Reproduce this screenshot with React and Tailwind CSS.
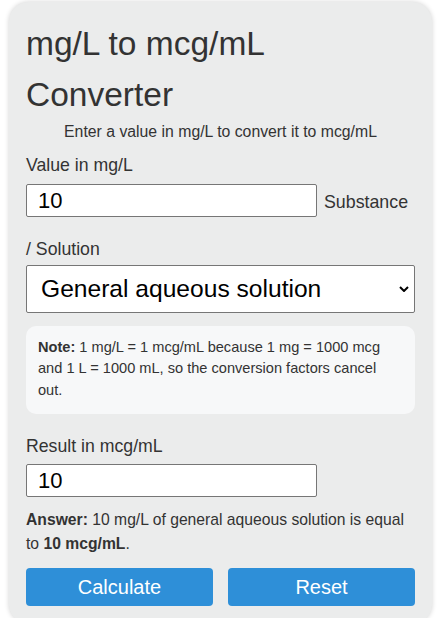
import React, { useState } from 'react'

const App = () => {
  const [value, setValue] = useState('10')
  const [result, setResult] = useState('10')

  const handleCalculate = () => setResult(value)
  const handleReset = () => {
    setValue('')
    setResult('')
  }

  return (
    <div className="min-h-[618px] bg-white pt-[2px] pl-[9px] pr-[5px] font-['Liberation_Sans',Arial,sans-serif] text-[#333]">
      <div className="rounded-[20px] bg-[#ebecec] px-[17px] pt-[16px] pb-[18px] shadow-[0_0_5px_rgba(0,0,0,0.18)]">
        {/* Header */}
        <h1 className="text-[33.5px] leading-[51px] font-normal">mg/L to mcg/mL Converter</h1>
        <p className="text-center text-[15.8px] leading-[24px]">
          Enter a value in mg/L to convert it to mcg/mL
        </p>

        {/* Value input */}
        <label className="mt-[11px] block text-[17.7px] leading-[20px]">Value in mg/L</label>
        <div className="mt-[8.7px] flex items-baseline">
          <input
            type="text"
            value={value}
            onChange={(e) => setValue(e.target.value)}
            className="h-[33px] w-[291px] rounded-[2px] border border-[#767676] bg-white px-[11px] text-[22px] text-black outline-none"
          />
          <span className="ml-[7px] text-[17.8px]">Substance</span>
        </div>
        <label className="mt-[22.6px] block text-[17.7px] leading-[20px]">/ Solution</label>
        <div className="relative mt-[6px]">
          <select className="h-[48px] w-full appearance-none rounded-[2px] border border-[#767676] bg-white pl-[14px] text-[24.6px] text-black outline-none">
            <option>General aqueous solution</option>
          </select>
          <svg
            className="pointer-events-none absolute right-[6px] top-[21px]"
            width="10"
            height="6"
            viewBox="0 0 10 6"
            fill="none"
          >
            <path d="M1 1L5 5L9 1" stroke="#000" strokeWidth="2" />
          </svg>
        </div>

        {/* Note */}
        <div className="mt-[12.5px] rounded-[10px] bg-[#f7f8f9] pl-[12px] pr-[28px] pt-[11px] pb-[12.5px] text-[14.6px] leading-[21.6px]">
          <strong>Note:</strong> 1 mg/L = 1 mcg/mL because 1 mg = 1000 mcg and 1 L = 1000 mL, so the
          conversion factors cancel out.
        </div>

        {/* Result */}
        <label className="mt-[22px] block text-[17.7px] leading-[20px]">Result in mcg/mL</label>
        <input
          type="text"
          value={result}
          readOnly
          className="mt-[8px] block h-[33px] w-[291px] rounded-[2px] border border-[#767676] bg-white px-[11px] text-[22px] text-black outline-none"
        />
        <p className="mt-[11.3px] text-[15.7px] leading-[23.4px]">
          <strong>Answer:</strong> 10 mg/L of general aqueous solution is equal to{' '}
          <strong>10 mcg/mL</strong>.
        </p>

        {/* Buttons */}
        <div className="mt-[13px] grid grid-cols-2 gap-[15px]">
          <button
            onClick={handleCalculate}
            className="h-[38px] rounded-[4px] bg-[#2e8fd8] text-[20px] text-white"
          >
            Calculate
          </button>
          <button
            onClick={handleReset}
            className="h-[38px] rounded-[4px] bg-[#2e8fd8] text-[20px] text-white"
          >
            Reset
          </button>
        </div>
      </div>
    </div>
  )
}

export default App
